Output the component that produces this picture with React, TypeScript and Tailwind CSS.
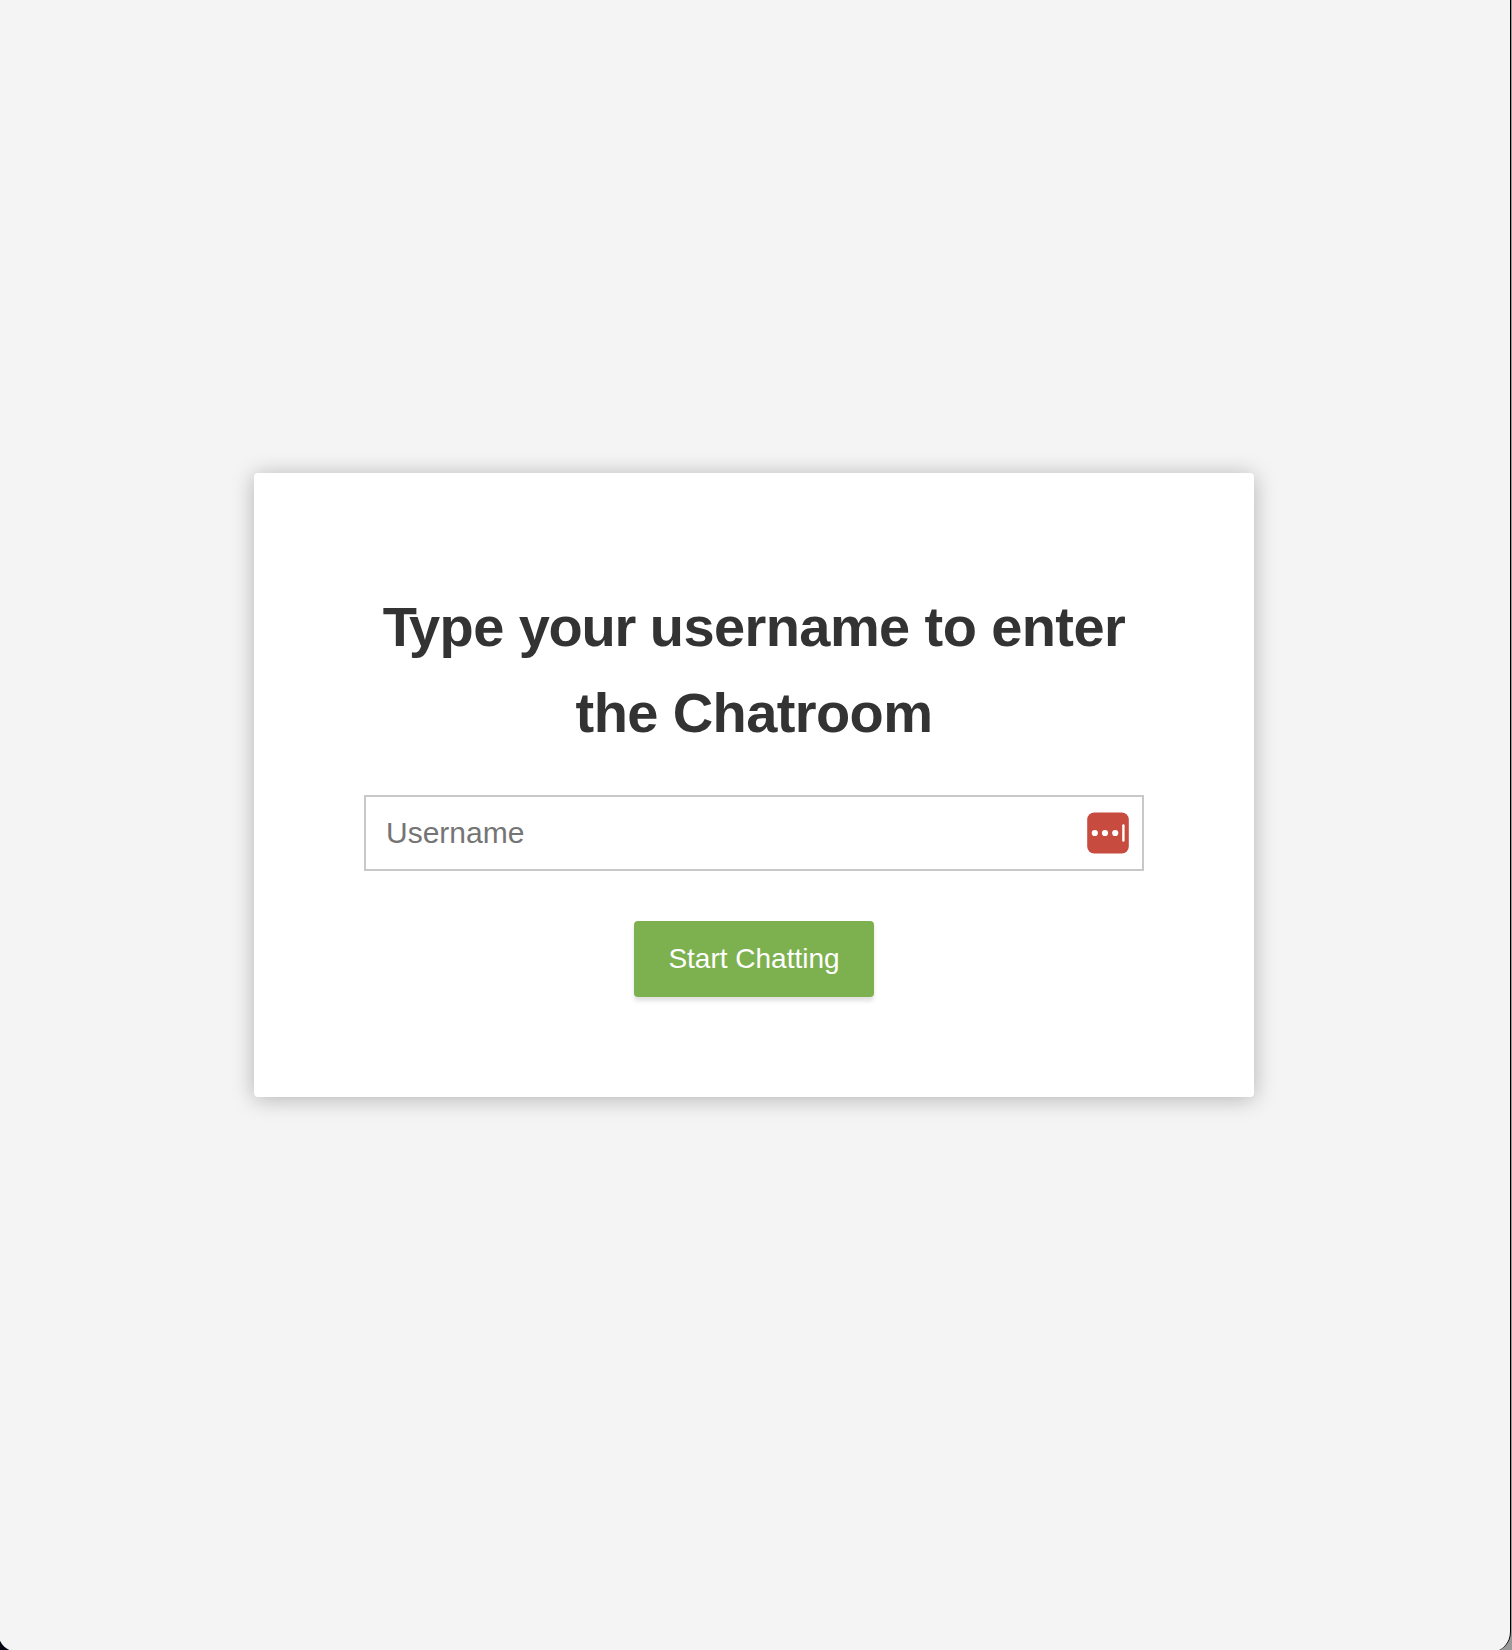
function PasswordManagerIcon() {
  return (
    <svg width="42" height="42" viewBox="0 0 42 42" aria-hidden="true">
      <rect x="0.2" y="0.5" width="41.6" height="41" rx="7" fill="#c84b40" />
      <circle cx="7.8" cy="21" r="3.1" fill="#fff" />
      <circle cx="18" cy="21" r="3.1" fill="#fff" />
      <circle cx="28.2" cy="21" r="3.1" fill="#fff" />
      <rect x="35.2" y="12.3" width="2.4" height="17.4" rx="1.2" fill="#fff" />
    </svg>
  );
}

export default function App() {
  return (
    <div className="h-[1650px] w-[1512px] overflow-hidden bg-linear-to-r from-[#02060f] from-50% to-[#999999] to-50% font-['Helvetica_Neue','Liberation_Sans',Arial,sans-serif]">
      <div className="-ml-0.5 h-[1652px] w-[1513px] rounded-b-[20px] border-r border-black bg-[#f4f4f4] pt-[473px] pl-64">
        <main className="h-[624px] w-[1000px] rounded bg-white px-[110px] pt-[111px] text-center shadow-[0_2px_22px_rgba(0,0,0,0.27)]">
          <h1 className="text-[56px] leading-[86px] font-bold whitespace-nowrap text-[#333333]">
            <span className="block tracking-[-0.6px] first-letter:tracking-[-8px]">
              Type <span className="tracking-[-1.3px]">your</span> username to enter
            </span>
            <span className="block tracking-[-0.6px]">the Chatroom</span>
          </h1>
          <form onSubmit={(e) => e.preventDefault()}>
            <div className="mt-[39px] flex h-[76px] items-center border-2 border-[#c8c8c8] pr-[13px] pl-5">
              <input
                type="text"
                placeholder="Username"
                className="h-full min-w-0 flex-1 bg-transparent text-[30px] outline-none placeholder:text-[#757575]"
              />
              <PasswordManagerIcon />
            </div>
            <button
              type="submit"
              className="mt-[50px] h-[76px] w-60 rounded bg-[#7db04f] text-[28px] text-white shadow-[0_4px_4px_rgba(0,0,0,0.12)]"
            >
              Start Chatting
            </button>
          </form>
        </main>
      </div>
    </div>
  );
}
